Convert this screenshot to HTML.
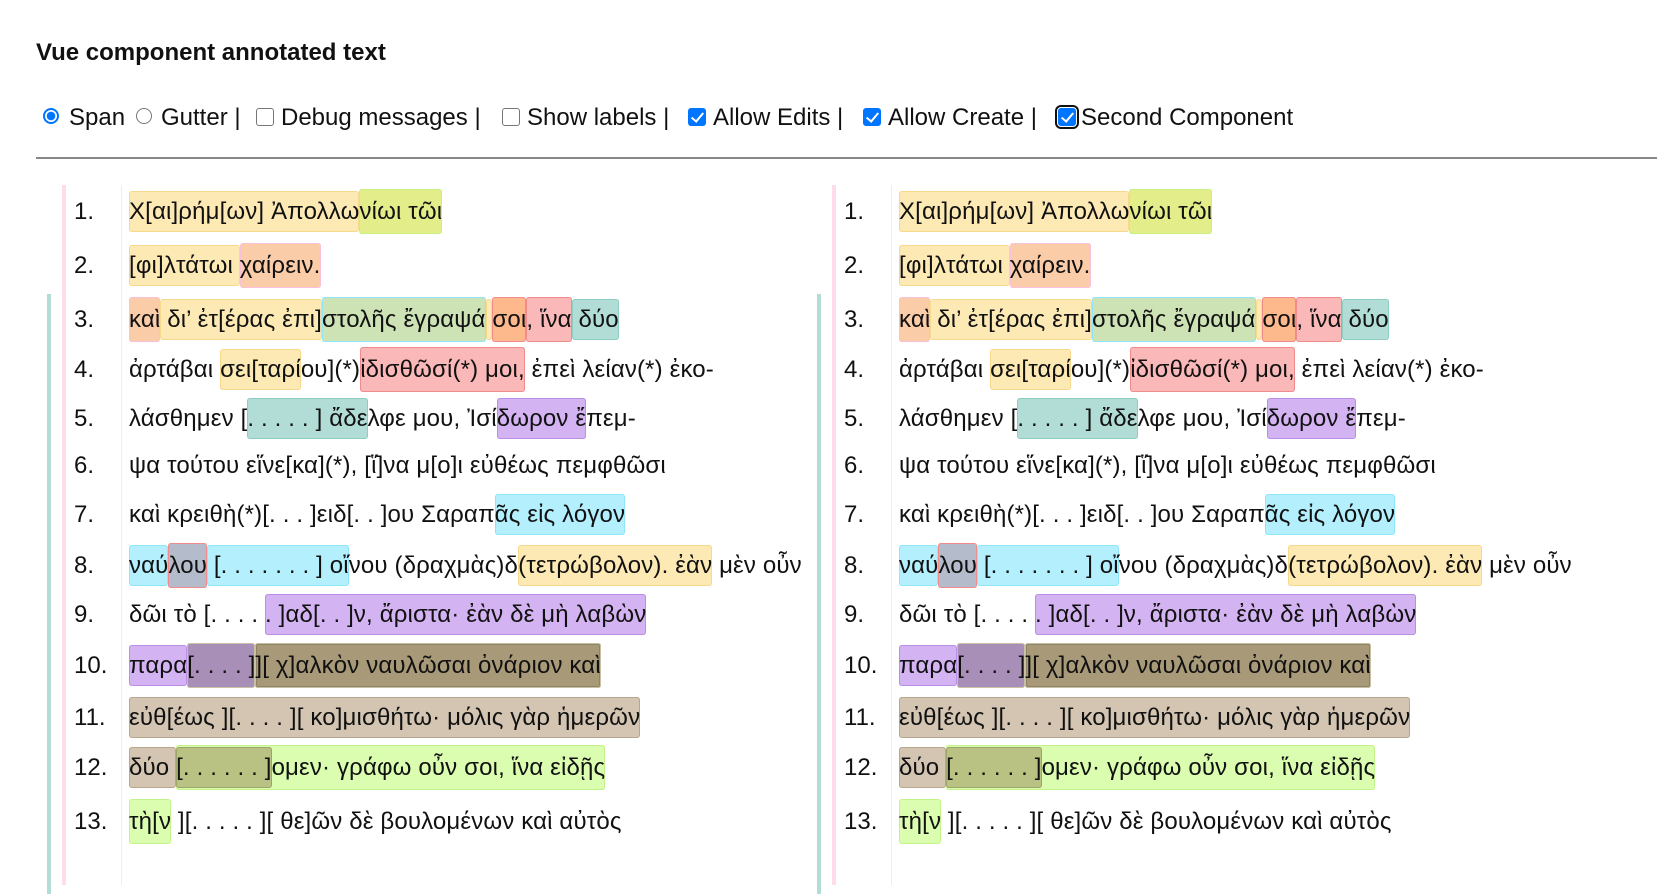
<!DOCTYPE html>
<html><head><meta charset="utf-8">
<style>
body{margin:0;width:1657px;height:852px;overflow:hidden;background:#fff;font-family:"Liberation Sans",Arial,sans-serif;color:#111;position:relative}
h1{position:absolute;left:36px;top:39px;margin:0;font-size:24px;font-weight:bold;color:#111}
.c{position:absolute;top:104px;font-size:24px;line-height:28px;white-space:nowrap}
.rb{position:absolute;top:108px;width:16px;height:16px;border-radius:50%;border:1.5px solid #767676;box-sizing:border-box}
.rb.on{border:2px solid #0075ff;background:radial-gradient(circle,#0075ff 0 4px,#fff 4.5px)}
.cb{position:absolute;top:108px;width:18px;height:18px;border-radius:3px;border:1.5px solid #767676;box-sizing:border-box}
.cb.on{background:#0075ff;border-color:#0075ff}
.cb.on:after{content:"";position:absolute;left:5px;top:1px;width:5px;height:10px;border:solid #fff;border-width:0 2.5px 2.5px 0;transform:rotate(40deg)}
hr{position:absolute;left:36px;top:157px;width:1640px;margin:0;border:0;border-top:2px solid #888}
.panel{position:absolute;top:0;width:770px;height:852px}
.pink{position:absolute;left:62px;top:185px;width:4px;height:700px;background:#fddcec}
.teal{position:absolute;left:47px;top:294px;width:4px;height:600px;background:#b2ddd6}
.gray{position:absolute;left:121px;top:185px;width:1px;height:700px;background:#eee}
.row{position:absolute;left:0;height:50px;line-height:50px;font-size:24px;white-space:nowrap}
.num{position:absolute;left:74px}
.txt{position:absolute;left:129px;letter-spacing:0.15px}
.t span{padding:7px 0;border-radius:3px}
.y{background:#fde9b4;box-shadow:inset 0 0 0 1px #f7d98c}
.g{background:#e3ee8a;box-shadow:inset 0 0 0 1px #c6f27f;padding:9px 0!important}
.o{background:#fbcca8;box-shadow:inset 0 0 0 1px #f9c0dc;padding:9px 0!important}
.cy{background:#b3effd;box-shadow:inset 0 0 0 1px #8fe6fb}
.cyy{background:#cde2b5;box-shadow:inset 0 0 0 1px #8fe6fb;padding:9px 0!important}
.r{background:#fab8b8;box-shadow:inset 0 0 0 1px #f28b8b;padding:9px 0!important}
.ro{background:#fdb88c;box-shadow:inset 0 0 0 1px #f28b8b;padding:9px 0!important}
.te{background:#b2ddd6;box-shadow:inset 0 0 0 1px #8ecdc2}
.p{background:#d3b3f2;box-shadow:inset 0 0 0 1px #b98ee6}
.gb{background:#b4bccb;box-shadow:inset 0 0 0 1px #f28b8b;padding:9px 0!important}
.ol{background:#a89a78;box-shadow:inset 0 0 0 1px #c8c1a6,inset 0 0 0 2px #8f8466;padding:9px 0!important}
.pol{background:#a88fb8;box-shadow:inset 0 0 0 1px #c8c1a6;padding:9px 0!important}
.tan{background:#d3c5b1;box-shadow:inset 0 0 0 1px #b8a890}
.lg{background:#dbfdb0;box-shadow:inset 0 0 0 1px #c2f38a;padding:9px 0!important}
.og{background:#b9c282;box-shadow:inset 0 0 0 1px #9aa66a}
</style></head><body>
<h1>Vue component annotated text</h1>
<div class="rb on" style="left:43px"></div><div class="c" style="left:69px">Span</div>
<div class="rb" style="left:136px"></div><div class="c" style="left:161px">Gutter |</div>
<div class="cb" style="left:256px"></div><div class="c" style="left:281px">Debug messages |</div>
<div class="cb" style="left:502px"></div><div class="c" style="left:527px">Show labels |</div>
<div class="cb on" style="left:688px"></div><div class="c" style="left:713px">Allow Edits |</div>
<div class="cb on" style="left:863px"></div><div class="c" style="left:888px">Allow Create |</div>
<div class="cb on" style="left:1058px;outline:2px solid #111;outline-offset:1px;border-radius:3px"></div><div class="c" style="left:1081px">Second Component</div>
<hr>

<div class="panel" style="left:0">
<div class="pink"></div><div class="teal"></div><div class="gray"></div>
<div class="row" style="top:187px"><span class="num">1.</span><span class="txt t"><span class="y">Χ[αι]ρήμ[ων] Ἀπολλω</span><span class="g">νίωι τῶι</span></span></div>
<div class="row" style="top:241px"><span class="num">2.</span><span class="txt t"><span class="y">[φι]λτάτωι </span><span class="o">χαίρειν.</span></span></div>
<div class="row" style="top:295px"><span class="num">3.</span><span class="txt t"><span class="o">καὶ</span><span class="y"> δι’ ἐτ[έρας ἐπι]</span><span class="cyy">στολῆς ἔγραψά</span><span class="y"> </span><span class="ro">σοι</span><span class="r">, ἵνα</span><span class="te"> δύο</span></span></div>
<div class="row" style="top:345px"><span class="num">4.</span><span class="txt t">ἀρτάβαι <span class="y">σει[ταρί</span>ου](*)<span class="r">ἰδισθῶσί(*) μοι,</span> ἐπεὶ λείαν(*) ἐκο-</span></div>
<div class="row" style="top:394px"><span class="num">5.</span><span class="txt t">λάσθημεν [<span class="te">. . . . . ] ἄδε</span>λφε μου, Ἰσί<span class="p">δωρον ἔ</span>πεμ-</span></div>
<div class="row" style="top:441px"><span class="num">6.</span><span class="txt t">ψα τούτου εἵνε[κα](*), [ἵ]να μ[ο]ι εὐθέως πεμφθῶσι</span></div>
<div class="row" style="top:490px"><span class="num">7.</span><span class="txt t">καὶ κρειθὴ(*)[. . . ]ειδ[. . ]ου Σαραπ<span class="cy">ᾶς εἰς λόγον</span></span></div>
<div class="row" style="top:541px"><span class="num">8.</span><span class="txt t"><span class="cy">ναύ</span><span class="gb">λου</span><span class="cy"> [. . . . . . . ] οἴ</span>νου (δραχμὰς)δ<span class="y">(τετρώβολον). ἐὰν</span> μὲν οὖν</span></div>
<div class="row" style="top:590px"><span class="num">9.</span><span class="txt t">δῶι τὸ [. . . . <span class="p">. ]αδ[. . ]ν, ἄριστα· ἐὰν δὲ μὴ λαβὼν</span></span></div>
<div class="row" style="top:641px"><span class="num">10.</span><span class="txt t"><span class="p">παρα</span><span class="pol">[. . . . ]</span><span class="ol">][ χ]αλκὸν ναυλῶσαι ὀνάριον καὶ</span></span></div>
<div class="row" style="top:693px"><span class="num">11.</span><span class="txt t"><span class="tan">εὐθ[έως ][. . . . ][ κο]μισθήτω· μόλις γὰρ ἡμερῶν</span></span></div>
<div class="row" style="top:743px"><span class="num">12.</span><span class="txt t"><span class="tan">δύο </span><span class="lg"><span class="og">[. . . . . . ]</span>ομεν· γράφω οὖν σοι, ἵνα εἰδῇς</span></span></div>
<div class="row" style="top:797px"><span class="num">13.</span><span class="txt t"><span class="lg">τὴ[ν</span> ][. . . . . ][ θε]ῶν δὲ βουλομένων καὶ αὐτὸς</span></div>
</div>

<div class="panel" style="left:770px">
<div class="pink"></div><div class="teal"></div><div class="gray"></div>
<div class="row" style="top:187px"><span class="num">1.</span><span class="txt t"><span class="y">Χ[αι]ρήμ[ων] Ἀπολλω</span><span class="g">νίωι τῶι</span></span></div>
<div class="row" style="top:241px"><span class="num">2.</span><span class="txt t"><span class="y">[φι]λτάτωι </span><span class="o">χαίρειν.</span></span></div>
<div class="row" style="top:295px"><span class="num">3.</span><span class="txt t"><span class="o">καὶ</span><span class="y"> δι’ ἐτ[έρας ἐπι]</span><span class="cyy">στολῆς ἔγραψά</span><span class="y"> </span><span class="ro">σοι</span><span class="r">, ἵνα</span><span class="te"> δύο</span></span></div>
<div class="row" style="top:345px"><span class="num">4.</span><span class="txt t">ἀρτάβαι <span class="y">σει[ταρί</span>ου](*)<span class="r">ἰδισθῶσί(*) μοι,</span> ἐπεὶ λείαν(*) ἐκο-</span></div>
<div class="row" style="top:394px"><span class="num">5.</span><span class="txt t">λάσθημεν [<span class="te">. . . . . ] ἄδε</span>λφε μου, Ἰσί<span class="p">δωρον ἔ</span>πεμ-</span></div>
<div class="row" style="top:441px"><span class="num">6.</span><span class="txt t">ψα τούτου εἵνε[κα](*), [ἵ]να μ[ο]ι εὐθέως πεμφθῶσι</span></div>
<div class="row" style="top:490px"><span class="num">7.</span><span class="txt t">καὶ κρειθὴ(*)[. . . ]ειδ[. . ]ου Σαραπ<span class="cy">ᾶς εἰς λόγον</span></span></div>
<div class="row" style="top:541px"><span class="num">8.</span><span class="txt t"><span class="cy">ναύ</span><span class="gb">λου</span><span class="cy"> [. . . . . . . ] οἴ</span>νου (δραχμὰς)δ<span class="y">(τετρώβολον). ἐὰν</span> μὲν οὖν</span></div>
<div class="row" style="top:590px"><span class="num">9.</span><span class="txt t">δῶι τὸ [. . . . <span class="p">. ]αδ[. . ]ν, ἄριστα· ἐὰν δὲ μὴ λαβὼν</span></span></div>
<div class="row" style="top:641px"><span class="num">10.</span><span class="txt t"><span class="p">παρα</span><span class="pol">[. . . . ]</span><span class="ol">][ χ]αλκὸν ναυλῶσαι ὀνάριον καὶ</span></span></div>
<div class="row" style="top:693px"><span class="num">11.</span><span class="txt t"><span class="tan">εὐθ[έως ][. . . . ][ κο]μισθήτω· μόλις γὰρ ἡμερῶν</span></span></div>
<div class="row" style="top:743px"><span class="num">12.</span><span class="txt t"><span class="tan">δύο </span><span class="lg"><span class="og">[. . . . . . ]</span>ομεν· γράφω οὖν σοι, ἵνα εἰδῇς</span></span></div>
<div class="row" style="top:797px"><span class="num">13.</span><span class="txt t"><span class="lg">τὴ[ν</span> ][. . . . . ][ θε]ῶν δὲ βουλομένων καὶ αὐτὸς</span></div>
</div>
</body></html>
